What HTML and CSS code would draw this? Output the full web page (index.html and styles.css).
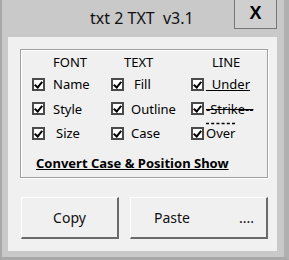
FILE: index.html
```html
<!DOCTYPE html>
<html lang="en">
  <head>
    <meta charset="UTF-8" />
    <title>txt 2 TXT v3.1</title>
    <link rel="stylesheet" href="styles.css">
  </head>
  <body>
    <div class="window">
      <div class="titlebar">
        <div class="title">txt 2 TXT&nbsp; v3.1</div>
        <div class="close">X</div>
      </div>

      <div class="client">
        <div class="group">
          <div class="options">
            <div class="head head-font">FONT</div>
            <div class="head head-text">TEXT</div>
            <div class="head head-line">LINE</div>

            <div class="opt col-font"><span class="box"></span><span class="lbl">Name</span></div>
            <div class="opt col-text"><span class="box"></span><span class="lbl pad">Fill</span></div>
            <div class="opt col-line"><span class="box"></span><span class="lbl under">_Under</span></div>

            <div class="opt col-font"><span class="box"></span><span class="lbl">Style</span></div>
            <div class="opt col-text"><span class="box"></span><span class="lbl">Outline</span></div>
            <div class="opt col-line"><span class="box"></span><span class="lbl strike">-Strike--</span></div>

            <div class="opt col-font"><span class="box"></span><span class="lbl pad">Size</span></div>
            <div class="opt col-text"><span class="box"></span><span class="lbl">Case</span></div>
            <div class="opt col-line"><span class="box"></span><span class="lbl over">Over</span></div>
          </div>
          <div class="convert">Convert Case &amp; Position Show</div>
        </div>

        <div class="buttons">
          <button class="btn btn-copy">Copy</button>
          <button class="btn btn-paste"><span>Paste</span><span class="dots">....</span></button>
        </div>
      </div>
    </div>
  </body>
</html>
```

FILE: styles.css
```css
* {
  margin: 0;
  padding: 0;
  box-sizing: border-box;
}

body {
  font-family: "Noto Sans", "Open Sans", sans-serif;
  background-color: #c9c9c9;
  color: #000;
}

.window {
  width: 289px;
  height: 260px;
  background-color: #c9c9c9;
  border-left: 2px solid #a8a8a8;
  border-right: 5px solid #b0b0b0;
  border-bottom: 3px solid #a8a8a8;
  display: flex;
  flex-direction: column;
}

/* title bar */
.titlebar {
  height: 37px;
  display: flex;
  align-items: flex-start;
}

.title {
  margin-left: 88px;
  margin-top: 7px;
  font-size: 16px;
  line-height: 22px;
  color: #111;
}

.close {
  margin-left: auto;
  margin-right: 7px;
  width: 43px;
  height: 29px;
  border: 1px solid #777;
  border-top: none;
  background-color: #cfcfcf;
  font-family: "Liberation Sans", Arial, sans-serif;
  font-weight: bold;
  font-size: 18px;
  line-height: 27px;
  text-align: center;
}

/* client area */
.client {
  margin: 0 7px 6px 6px;
  flex: 1;
  background-color: #f0f0f0;
  padding: 12px 9px 0 12px;
}

.group {
  height: 129px;
  border: 1px solid #a0a0a0;
  box-shadow: 1px 1px 0 #fff, inset 1px 1px 0 #fff;
  padding: 4px 0 0 11px;
}

.options {
  display: grid;
  grid-template-columns: 79px 80px 1fr;
  grid-template-rows: 18px repeat(3, 24.5px);
  font-size: 13px;
}

.head {
  line-height: 16px;
}

.head-font { padding-left: 21px; }
.head-text { padding-left: 13px; }
.head-line { padding-left: 21px; }

.opt {
  display: flex;
  align-items: center;
}

.box {
  width: 13px;
  height: 13px;
  border: 2px solid #4a4a4a;
  background-color: #fff;
  position: relative;
  flex-shrink: 0;
}

.box::after {
  content: "";
  position: absolute;
  left: 2px;
  top: 0px;
  width: 3px;
  height: 6px;
  border-right: 2px solid #000;
  border-bottom: 2px solid #000;
  transform: rotate(40deg);
}

.col-font .lbl { margin-left: 8px; }
.col-text .lbl { margin-left: 7px; }
.col-line .lbl { margin-left: 2px; }
.lbl.pad { padding-left: 3px; }

.under {
  text-decoration: underline;
}

.strike {
  text-decoration: line-through;
}

.over {
  text-decoration: overline dashed;
}

.convert {
  margin: 8px 0 0 4px;
  font-size: 13px;
  font-weight: bold;
  text-decoration: underline;
}

/* buttons */
.buttons {
  display: flex;
  gap: 11px;
  margin-top: 19px;
  padding-left: 1px;
}

.btn {
  height: 42px;
  background-color: #f0f0f0;
  border: none;
  border-top: 1px solid #fff;
  border-left: 1px solid #fff;
  border-right: 2px solid #6a6a6a;
  border-bottom: 2px solid #6a6a6a;
  font-family: inherit;
  font-size: 14px;
  color: #111;
}

.btn-copy {
  width: 98px;
}

.btn-paste {
  width: 138px;
  display: flex;
  align-items: center;
  padding: 0 12px 0 23px;
}

.dots {
  margin-left: auto;
}
```
